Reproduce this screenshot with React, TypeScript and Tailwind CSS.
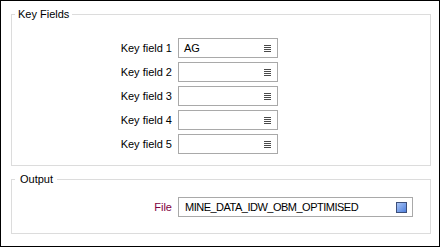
import React from "react";

function ListIcon() {
  return (
    <svg width="7" height="7" viewBox="0 0 7 7" className="shrink-0">
      <rect x="0" y="0" width="7" height="1" fill="#4a4a4a" />
      <rect x="0" y="2" width="7" height="1" fill="#4a4a4a" />
      <rect x="0" y="4" width="7" height="1" fill="#4a4a4a" />
      <rect x="0" y="6" width="7" height="1" fill="#4a4a4a" />
    </svg>
  );
}

function KeyRow({ label, value }: { label: string; value?: string }) {
  return (
    <div className="flex items-center">
      <div className="w-[166px] text-right pr-[6px] text-black">{label}</div>
      <div className="w-[100px] h-[20px] border border-[#a9a9a9] bg-white flex items-center justify-between pl-[5px] pr-[6px]">
        <span className="text-black">{value ?? ""}</span>
        <ListIcon />
      </div>
    </div>
  );
}

export default function App() {
  return (
    <div className="w-[441px] h-[248px] bg-white font-['Liberation_Sans',Arial,sans-serif] text-[11px] leading-[13px]">
      <div className="w-[440px] h-[247px] border border-black flex flex-col pl-[10px] pr-[8px]">
        <fieldset className="mt-[7px] border border-[#dcdcdc] pt-[17px] pb-[11px] flex flex-col gap-[4px]">
          <legend className="ml-[3px] px-[3px] leading-[13px] text-black">Key Fields</legend>
          <KeyRow label="Key field 1" value="AG" />
          <KeyRow label="Key field 2" />
          <KeyRow label="Key field 3" />
          <KeyRow label="Key field 4" />
          <KeyRow label="Key field 5" />
        </fieldset>
        <fieldset className="mt-[7px] border border-[#dcdcdc] pt-[11px] pb-[16px] flex flex-col">
          <legend className="ml-[3px] pl-[5px] pr-[4px] leading-[13px] text-black">Output</legend>
          <div className="flex items-center">
            <div className="w-[166px] text-right pr-[6px] text-[#800040]">File</div>
            <div className="w-[235px] h-[20px] border border-[#a9a9a9] bg-white flex items-center justify-between pl-[6px] pr-[5px]">
              <span className="text-black tracking-[-0.5px]">MINE_DATA_IDW_OBM_OPTIMISED</span>
              <div className="w-[11px] h-[11px] border border-[#3d4f7a] bg-gradient-to-br from-[#a9c4f5] to-[#4f7fdc]" />
            </div>
          </div>
        </fieldset>
      </div>
    </div>
  );
}
